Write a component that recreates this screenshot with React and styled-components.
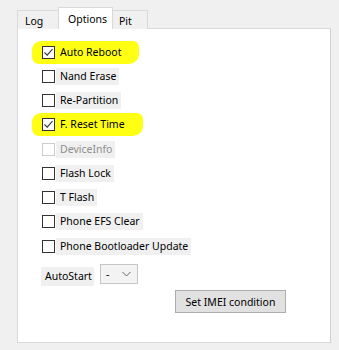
import React from "react";
import styled, { createGlobalStyle } from "styled-components";

const GlobalStyle = createGlobalStyle`
  body {
    margin: 0;
    background: #f0f0f0;
    font-family: "Noto Sans", "Open Sans", sans-serif;
    font-size: 10.5px;
    color: #000;
  }
`;

const options = [
  { label: "Auto Reboot", checked: true, highlight: true },
  { label: "Nand Erase" },
  { label: "Re-Partition" },
  { label: "F. Reset Time", checked: true, highlight: true },
  { label: "DeviceInfo", disabled: true },
  { label: "Flash Lock" },
  { label: "T Flash" },
  { label: "Phone EFS Clear" },
  { label: "Phone Bootloader Update" }
];

const tabs = ["Log", "Options", "Pit"];

const Frame = styled.div`
  padding: 7px 0 0 17px;
  width: 314px;
`;

const TabBar = styled.div`
  display: flex;
  align-items: flex-end;
  height: 22px;
`;

const Tab = styled.div`
  position: relative;
  box-sizing: border-box;
  height: ${p => (p.$active ? "22px" : "19px")};
  width: ${p => p.$w}px;
  padding: ${p => (p.$active ? "1px 0 0 9px" : "2px 0 0 7px")};
  margin: ${p => (p.$active ? "0 -2px" : "0")};
  z-index: ${p => (p.$active ? 2 : 1)};
  border: 1px solid #d9d9d9;
  border-bottom: none;
  background: ${p => (p.$active ? "#fff" : "#f0f0f0")};
  display: flex;
  align-items: center;
`;

const Panel = styled.div`
  box-sizing: border-box;
  margin-top: -1px;
  width: 314px;
  height: 315px;
  border: 1px solid #d9d9d9;
  border-right-color: #cfcfcf;
  background: #fff;
  padding: 11px 0 0 14px;
`;

const Row = styled.div`
  display: flex;
  height: 24.25px;
  align-items: center;
`;

const Item = styled.div`
  display: inline-flex;
  align-items: center;
  height: 23px;
  padding: 0 15px 0 10px;
  border-radius: 9px 6px 10px 7px;
  background: ${p => (p.$highlight ? "#ffff14" : "transparent")};
`;

const Box = styled.span`
  box-sizing: border-box;
  width: 13px;
  height: 13px;
  border: 1px solid ${p => (p.$disabled ? "#cccccc" : "#333")};
  background: #fff;
  display: flex;
  align-items: center;
  justify-content: center;
`;

const Label = styled.span`
  margin-left: 1px;
  padding: 0 3px 0 4px;
  height: 17px;
  line-height: 17px;
  background: ${p => (p.$highlight ? "transparent" : "#f0f0f0")};
  color: ${p => (p.$disabled ? "#8f8f8f" : "#000")};
  white-space: nowrap;
`;

const StartRow = styled.div`
  display: flex;
  align-items: flex-start;
  margin: 6px 0 0 9px;
`;

const StartLabel = styled.span`
  margin-top: 3px;
  height: 19px;
  line-height: 19px;
  padding: 0 2px 0 4px;
  background: #f0f0f0;
`;

const Select = styled.div`
  box-sizing: border-box;
  margin-left: 6px;
  width: 38px;
  height: 20px;
  border: 1px solid #c6c6c6;
  background: #f3f3f3;
  display: flex;
  align-items: center;
  justify-content: space-between;
  padding: 0 6px 0 5px;
`;

const Button = styled.div`
  box-sizing: border-box;
  margin: 4px 0 0 143px;
  width: 111px;
  height: 23px;
  border: 1px solid #adadad;
  background: #e1e1e1;
  display: flex;
  align-items: center;
  justify-content: center;
`;

const Check = () => (
  <svg width="11" height="11" viewBox="0 0 11 11">
    <path d="M1.5 5.5 L4.2 8.2 L9.5 2.2" fill="none" stroke="#333" strokeWidth="1.1" />
  </svg>
);

const Chevron = () => (
  <svg width="9" height="6" viewBox="0 0 9 6">
    <path d="M0.5 1 L4.5 5 L8.5 1" fill="none" stroke="#666" strokeWidth="1" />
  </svg>
);

const tabWidths = { Log: 43, Options: 55, Pit: 37 };

export default function App() {
  return (
    <Frame>
      <GlobalStyle />
      <TabBar>
        {tabs.map(t => (
          <Tab key={t} $active={t === "Options"} $w={tabWidths[t]}>
            {t}
          </Tab>
        ))}
      </TabBar>
      <Panel>
        {options.map(o => (
          <Row key={o.label}>
            <Item $highlight={o.highlight}>
              <Box $disabled={o.disabled}>{o.checked && <Check />}</Box>
              <Label $highlight={o.highlight} $disabled={o.disabled}>
                {o.label}
              </Label>
            </Item>
          </Row>
        ))}
        <StartRow>
          <StartLabel>AutoStart</StartLabel>
          <Select>
            <span>-</span>
            <Chevron />
          </Select>
        </StartRow>
        <Button>Set IMEI condition</Button>
      </Panel>
    </Frame>
  );
}
